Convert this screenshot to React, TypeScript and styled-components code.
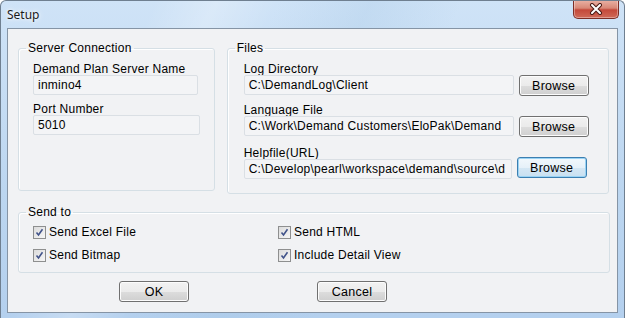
import React from 'react';
import styled, { createGlobalStyle } from 'styled-components';

const GlobalStyle = createGlobalStyle`
    html, body {
        margin: 0;
        padding: 0;
        background: #ffffff;
    }
    body {
        font-family: "Liberation Sans", Arial, sans-serif;
        font-size: 12px;
        letter-spacing: 0.25px;
        color: #000;
    }
`;

const Window = styled.div`
    width: 625px;
    height: 318px;
    box-sizing: border-box;
    display: flex;
    flex-direction: column;
    border: 1px solid #6f7f90;
    border-bottom: none;
    border-radius: 6px 6px 0 0;
    background:
        linear-gradient(115deg, rgba(255,255,255,0) 20%, rgba(255,255,255,0.25) 28%, rgba(255,255,255,0) 36%, rgba(160,195,225,0.25) 48%, rgba(255,255,255,0) 60%),
        linear-gradient(180deg, #cfe3f7 0%, #bcd6f0 60%, #b4d0ee 100%);
    overflow: hidden;
`;

const TitleBar = styled.div`
    height: 27px;
    display: flex;
    justify-content: space-between;
    align-items: flex-start;
    flex-shrink: 0;
`;

const Title = styled.span`
    font-family: "Noto Sans", "Open Sans", sans-serif;
    font-size: 12px;
    letter-spacing: 0;
    line-height: 16px;
    margin: 6px 0 0 6px;
    color: #1a1a1a;
    text-shadow: 0 0 6px #ffffff, 0 0 3px #ffffff;
`;

const CloseButton = styled.div`
    width: 44px;
    height: 18px;
    margin: -1px 5px 0 0;
    display: flex;
    align-items: center;
    justify-content: center;
    border: 1px solid #7d2e26;
    border-top: none;
    border-radius: 0 0 5px 5px;
    background: linear-gradient(180deg, #eab3a6 0%, #d88877 45%, #c4493a 55%, #d06a58 100%);
    box-shadow: inset 0 0 0 1px rgba(255,255,255,0.35);
`;

const Client = styled.div`
    flex: 1;
    margin: 0 6px 5px 6px;
    border: 1px solid #8594a5;
    background: #f1f2f4;
    padding: 12px 8px 0 10px;
    display: flex;
    flex-direction: column;
`;

const TopRow = styled.div`
    display: flex;
    gap: 12px;
    align-items: flex-start;
`;

const Group = styled.fieldset<{ $w: number; $h: number; $top?: number }>`
    box-sizing: border-box;
    width: ${p => p.$w}px;
    height: ${p => p.$h}px;
    margin: ${p => p.$top ?? 0}px 0 0 0;
    padding: 0;
    border: 1px solid #d5dfe5;
    border-radius: 3px;
    box-shadow: inset 1px 1px 0 #ffffff;
    min-width: 0;
`;

const Legend = styled.legend`
    margin-left: 7px;
    padding: 0 2px;
    font-size: 12px;
    line-height: 14px;
`;

const GroupBody = styled.div<{ $left: number }>`
    padding: 8px 0 0 ${p => p.$left}px;
    display: flex;
    flex-direction: column;
`;

const Label = styled.div<{ $gap?: number }>`
    line-height: 12px;
    height: 12px;
    margin-top: ${p => p.$gap ?? 0}px;
    white-space: nowrap;
`;

const TextBox = styled.div<{ $w: number }>`
    box-sizing: border-box;
    width: ${p => p.$w}px;
    height: 20px;
    border: 1px solid #dadfe4;
    border-radius: 2px;
    background: #f3f4f6;
    padding: 0 4px;
    line-height: 18px;
    white-space: nowrap;
    overflow: hidden;
`;

const FieldRow = styled.div<{ $lift?: number }>`
    display: flex;
    align-items: flex-start;
    gap: 5px;
`;

const Button = styled.div<{ $focused?: boolean; $shift?: number }>`
    box-sizing: border-box;
    width: 70px;
    height: 21px;
    margin-top: ${p => p.$shift ?? 0}px;
    display: flex;
    align-items: center;
    justify-content: center;
    border: 1px solid ${p => (p.$focused ? '#3c7fb1' : '#707070')};
    border-radius: 3px;
    background: ${p =>
        p.$focused
            ? 'linear-gradient(180deg, #f2f8fc 0%, #e6f1f9 50%, #d5e7f4 51%, #c8e0f1 100%)'
            : 'linear-gradient(180deg, #f2f2f2 0%, #ebebeb 50%, #dddddd 51%, #cfcfcf 100%)'};
    box-shadow: inset 0 0 0 1px ${p => (p.$focused ? '#9ad3f4' : '#fcfcfc')};
    font-size: 12.5px;
`;

const ChecksGrid = styled.div`
    display: grid;
    grid-template-columns: 245px 245px;
    row-gap: 7px;
    padding: 5px 0 0 14px;
`;

const CheckItem = styled.div`
    display: flex;
    align-items: center;
    height: 16px;
    gap: 3px;
    white-space: nowrap;
`;

const Box = styled.span`
    box-sizing: border-box;
    width: 13px;
    height: 13px;
    border: 1px solid #8e8f8f;
    background: linear-gradient(135deg, #dcdcdc 0%, #f6f6f6 100%);
    display: flex;
    align-items: center;
    justify-content: center;
`;

const ButtonRow = styled.div`
    display: flex;
    gap: 128px;
    padding: 8px 0 0 101px;
`;

const Check: React.FC<{ label: string }> = ({ label }) => (
    <CheckItem>
        <Box>
            <svg width="9" height="9" viewBox="0 0 9 9">
                <path d="M1.5 4.5 L3.5 7 L7.5 1.2" fill="none" stroke="#41538a" strokeWidth="1.6" />
            </svg>
        </Box>
        {label}
    </CheckItem>
);

const App: React.FC = (): JSX.Element => {
    return (
        <>
            <GlobalStyle />
            <Window>
                <TitleBar>
                    <Title>Setup</Title>
                    <CloseButton>
                        <svg width="14" height="12" viewBox="0 0 14 12">
                            <path d="M3 2 L11 10 M11 2 L3 10" stroke="#4a1a14" strokeWidth="4" strokeLinecap="round" />
                            <path d="M3 2 L11 10 M11 2 L3 10" stroke="#ffffff" strokeWidth="2" strokeLinecap="round" />
                        </svg>
                    </CloseButton>
                </TitleBar>
                <Client>
                    <TopRow>
                        <Group $w={197} $h={150}>
                            <Legend>Server Connection</Legend>
                            <GroupBody $left={14}>
                                <Label>Demand Plan Server Name</Label>
                                <TextBox $w={165}>inmino4</TextBox>
                                <Label $gap={8}>Port Number</Label>
                                <TextBox $w={167}>5010</TextBox>
                            </GroupBody>
                        </Group>
                        <Group $w={383} $h={153}>
                            <Legend>Files</Legend>
                            <GroupBody $left={16}>
                                <Label>Log Directory</Label>
                                <FieldRow>
                                    <TextBox $w={270}>C:\DemandLog\Client</TextBox>
                                    <Button>Browse</Button>
                                </FieldRow>
                                <Label $gap={8}>Language File</Label>
                                <FieldRow>
                                    <TextBox $w={270}>C:\Work\Demand Customers\EloPak\Demand</TextBox>
                                    <Button>Browse</Button>
                                </FieldRow>
                                <Label $gap={10}>Helpfile(URL)</Label>
                                <FieldRow>
                                    <TextBox $w={268}>C:\Develop\pearl\workspace\demand\source\d</TextBox>
                                    <Button $focused $shift={-2}>Browse</Button>
                                </FieldRow>
                            </GroupBody>
                        </Group>
                    </TopRow>
                    <Group $w={592} $h={68} $top={11}>
                        <Legend>Send to</Legend>
                        <ChecksGrid>
                            <Check label="Send Excel File" />
                            <Check label="Send HTML" />
                            <Check label="Send Bitmap" />
                            <Check label="Include Detail View" />
                        </ChecksGrid>
                    </Group>
                    <ButtonRow>
                        <Button>OK</Button>
                        <Button>Cancel</Button>
                    </ButtonRow>
                </Client>
            </Window>
        </>
    );
};

export default App;
